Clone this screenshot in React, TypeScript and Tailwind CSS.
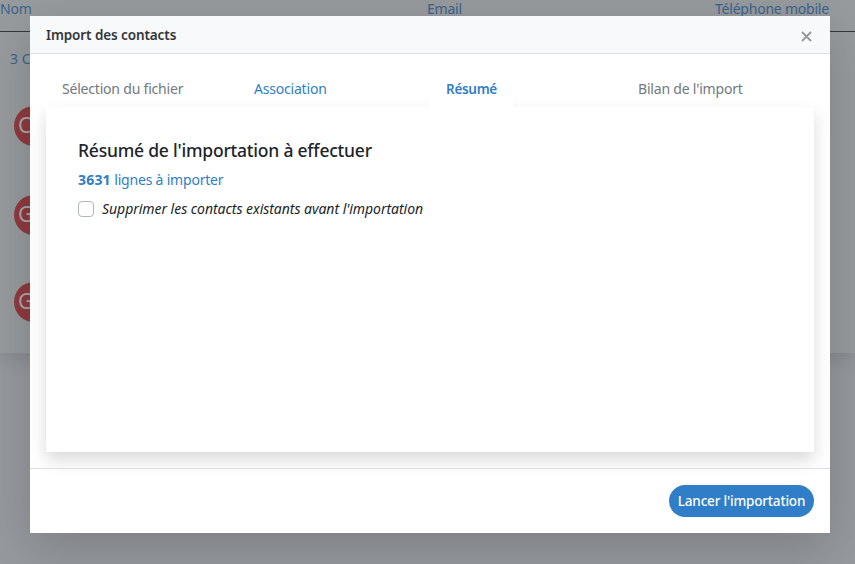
import React from "react";

const contacts = [
  { initial: "C", gap: "mt-[37px]" },
  { initial: "G", gap: "mt-[49px]" },
  { initial: "G", gap: "mt-[47px]" },
];

function ContactsPage() {
  return (
    <div className="h-[564px] w-[855px] overflow-hidden bg-[#96999e]">
      <div className="h-[353px] bg-[#979b9e] shadow-[0_8px_16px_rgba(0,0,0,0.09)]">
        <div className="flex h-8 border-b border-[#34383d] tracking-[-0.22px] text-[#3b648d]">
          <span className="w-[427px] leading-[18px]">Nom</span>
          <span className="w-[288px] leading-[18px]">Email</span>
          <span className="whitespace-nowrap leading-[18px]">Téléphone mobile</span>
        </div>
        <div className="pl-[10px] pt-[17px] leading-5 text-[#3b648d]">3 Contacts</div>
        {contacts.map((contact, i) => (
          <div
            key={i}
            className={`ml-[14px] flex h-10 w-10 items-center rounded-full bg-[#903a3e] pl-[4px] text-[21px] text-[#a6a9ab] ${contact.gap}`}
          >
            {contact.initial}
          </div>
        ))}
      </div>
    </div>
  );
}

function ImportDialog() {
  return (
    <section
      role="dialog"
      className="absolute left-[30px] top-4 flex h-[517px] w-[800px] flex-col bg-white shadow-[0_16px_48px_rgba(0,0,0,0.175)]"
    >
      <header className="flex h-[38px] shrink-0 items-center justify-between border-b border-[#dee2e6] bg-[#f8f9fb] px-4">
        <h1 className="pt-[2px] text-[13.5px] font-semibold tracking-[-0.1px] text-[#33363a]">Import des contacts</h1>
        <button aria-label="Fermer" className="mr-[2px] mt-[4px] text-[#96989a]">
          <svg width="11" height="11" viewBox="0 0 11 11" fill="none" stroke="currentColor" strokeWidth="1.8">
            <path d="M1 1l9 9M10 1l-9 9" />
          </svg>
        </button>
      </header>
      <div className="flex flex-1 flex-col px-4 pt-[19px] pb-4">
        <nav className="relative z-10 grid h-[34px] shrink-0 grid-cols-4 leading-[31px] tracking-[-0.2px]">
          <span className="pl-4 text-[#71787e]">Sélection du fichier</span>
          <span className="pl-4 text-[#2f7ec7]">Association</span>
          <span className="w-[83px] bg-white pl-4 text-[13.5px] font-semibold leading-[33px] tracking-[-0.3px] text-[#2f7ec7]">
            Résumé
          </span>
          <span className="pl-4 text-[#71787e]">Bilan de l'import</span>
        </nav>
        <div className="flex-1 bg-white px-8 pt-[31px] shadow-[0_8px_16px_rgba(0,0,0,0.15)]">
          <h2 className="text-[17.5px] font-medium leading-6 tracking-[-0.22px] text-[#212529]">
            Résumé de l'importation à effectuer
          </h2>
          <p className="mt-[8px] leading-5 tracking-[-0.2px] text-[#2f7ec7]">
            <b className="tracking-[0.2px]">3631</b> lignes à importer
          </p>
          <label className="mt-[9px] flex items-center gap-2 leading-5 tracking-[-0.04px] text-[#212529]">
            <input type="checkbox" className="h-4 w-4 appearance-none rounded-[4px] border border-[#adb5bd] bg-white" />
            <em>Supprimer les contacts existants avant l'importation</em>
          </label>
        </div>
      </div>
      <footer className="flex h-[65px] shrink-0 items-center justify-end border-t border-[#d9dfe5] px-4">
        <button className="h-8 w-[145px] whitespace-nowrap rounded-full bg-[#2f7ec7] pt-px text-center text-[13.5px] font-medium tracking-[-0.18px] text-white">
          Lancer l'importation
        </button>
      </footer>
    </section>
  );
}

export default function App() {
  return (
    <main className="relative h-[564px] w-[855px] overflow-hidden font-['Noto_Sans','Open_Sans',sans-serif] text-[14px]">
      <ContactsPage />
      <ImportDialog />
    </main>
  );
}
